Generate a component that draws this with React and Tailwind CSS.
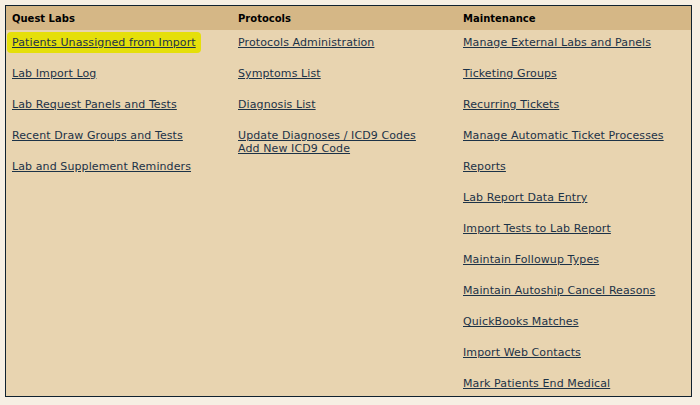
export default function App() {
  const col1 = [
    ["Patients Unassigned from Import"],
    ["Lab Import Log"],
    ["Lab Request Panels and Tests"],
    ["Recent Draw Groups and Tests"],
    ["Lab and Supplement Reminders"],
  ];
  const col2 = [
    ["Protocols Administration"],
    ["Symptoms List"],
    ["Diagnosis List"],
    ["Update Diagnoses / ICD9 Codes", "Add New ICD9 Code"],
  ];
  const col3 = [
    ["Manage External Labs and Panels"],
    ["Ticketing Groups"],
    ["Recurring Tickets"],
    ["Manage Automatic Ticket Processes"],
    ["Reports"],
    ["Lab Report Data Entry"],
    ["Import Tests to Lab Report"],
    ["Maintain Followup Types"],
    ["Maintain Autoship Cancel Reasons"],
    ["QuickBooks Matches"],
    ["Import Web Contacts"],
    ["Mark Patients End Medical"],
  ];
  const renderCol = (items, highlightFirst) => (
    <div className="flex flex-col gap-[18px] pt-[6px] pb-[6px] px-[6px]">
      {items.map((lines, i) => (
        <div key={i} className="flex flex-col">
          {lines.map((t, j) =>
            highlightFirst && i === 0 ? (
              <span key={j} className="self-start -mx-[5px] -my-[4px] px-[5px] py-[4px] rounded-[4px] bg-[#e5df0a]">
                <a href="#" className="underline text-[#1c3247] leading-[13px] block">{t}</a>
              </span>
            ) : (
              <a key={j} href="#" className="underline text-[#1c3247] leading-[13px] self-start">{t}</a>
            )
          )}
        </div>
      ))}
    </div>
  );
  return (
    <div className="w-[700px] h-[405px] bg-[#f6efe3] pt-[5px] pl-[5px]" style={{ fontFamily: '"DejaVu Sans", Verdana, sans-serif' }}>
      <div className="w-[687px] border border-[#10222f] bg-[#e8d4b0] text-[11px] tracking-[0.1px]">
        <div className="grid grid-cols-[226px_225px_1fr] bg-[#d5b786] h-[24px] items-center pt-[1px] font-bold text-[10px] tracking-normal text-black">
          <div className="px-[6px]">Quest Labs</div>
          <div className="px-[6px]">Protocols</div>
          <div className="px-[6px]">Maintenance</div>
        </div>
        <div className="grid grid-cols-[226px_225px_1fr] items-start">
          {renderCol(col1, true)}
          {renderCol(col2, false)}
          {renderCol(col3, false)}
        </div>
      </div>
    </div>
  );
}
